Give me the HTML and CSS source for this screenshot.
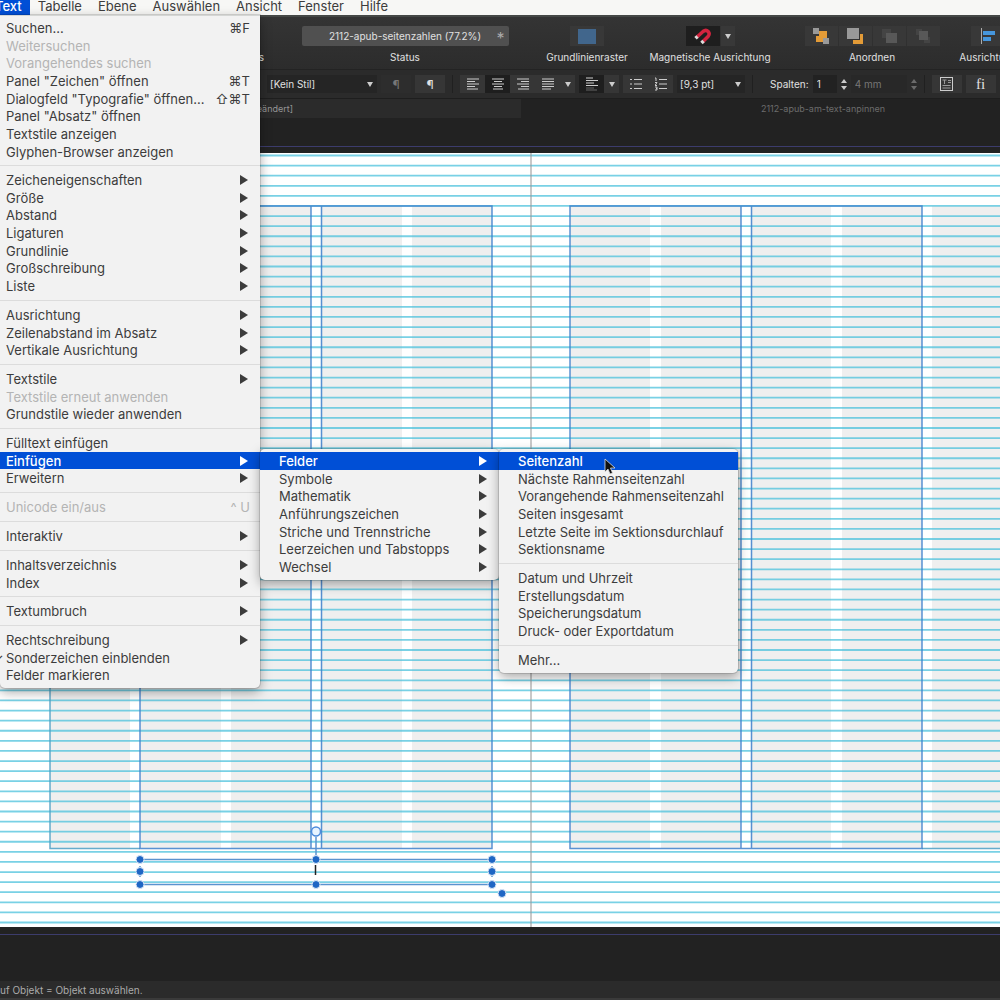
FILE: index.html
```
<!DOCTYPE html>
<html lang="de">
<head>
    <meta charset="UTF-8">
    <meta name="viewport" content="width=device-width, initial-scale=1.0">
    <title>2112-apub-seitenzahlen</title>
    <link rel="stylesheet" href="styles.css">
</head>
<body>
    <!-- Menu Bar -->
    <nav class="menubar">
        <button class="menubar-item open">Text</button>
        <button class="menubar-item">Tabelle</button>
        <button class="menubar-item">Ebene</button>
        <button class="menubar-item">Auswählen</button>
        <button class="menubar-item">Ansicht</button>
        <button class="menubar-item">Fenster</button>
        <button class="menubar-item">Hilfe</button>
    </nav>

    <!-- Toolbar -->
    <header class="toolbar">
        <div class="tool tool-end">
            <div class="tool-buttons"></div>
            <span class="tool-label">s</span>
        </div>
        <div class="tool">
            <div class="status-field"><span>2112-apub-seitenzahlen (77.2%)</span><span class="star">*</span></div>
            <span class="tool-label">Status</span>
        </div>
        <div class="tool">
            <div class="tool-buttons">
                <button class="tool-btn wide" aria-label="Grundlinienraster">
                    <svg width="18" height="16"><rect width="18" height="15" y="1" fill="#41668c"/></svg>
                </button>
            </div>
            <span class="tool-label">Grundlinienraster</span>
        </div>
        <div class="tool">
            <div class="tool-buttons">
                <button class="tool-btn wide pressed" aria-label="Magnetische Ausrichtung">
                    <svg width="18" height="18" viewBox="0 0 18 18" fill="none" stroke-width="3.500">
                        <path d="M3 10 L9 4.500 C13 1.500 17 6 14 9.500 L9 14.500" stroke="#d3243f"/>
                        <path d="M1.500 11.300 L3.500 9.500 M7.500 16 L9.500 14" stroke="#dcdcdc"/>
                    </svg>
                </button>
                <button class="tool-btn arrow" aria-label="Ausrichtungsoptionen"><i class="tri"></i></button>
            </div>
            <span class="tool-label">Magnetische Ausrichtung</span>
        </div>
        <div class="tool">
            <div class="tool-buttons">
                <button class="tool-btn" aria-label="Ganz nach hinten">
                    <svg width="18" height="18"><path d="M7 4h8v7h-4v4H4V9h3z" fill="#e39b37"/><rect x="1" y="1" width="6" height="6" fill="#999"/><rect x="11" y="11" width="6" height="6" fill="#999"/></svg>
                </button>
                <button class="tool-btn" aria-label="Eins nach hinten">
                    <svg width="18" height="18"><path d="M7 7h10v10H7z" fill="#e39b37"/><path d="M2 2h12v11H2z" fill="#333"/><rect x="1" y="1" width="12" height="11" fill="#999"/></svg>
                </button>
                <button class="tool-btn" aria-label="Eins nach vorne" disabled>
                    <svg width="18" height="18"><rect x="2" y="2" width="9" height="9" fill="#444"/><rect x="6" y="6" width="11" height="10" fill="#585858"/></svg>
                </button>
                <button class="tool-btn" aria-label="Ganz nach vorne" disabled>
                    <svg width="18" height="18"><rect x="2" y="2" width="6" height="6" fill="#444"/><rect x="10" y="10" width="6" height="6" fill="#444"/><rect x="5" y="4" width="9" height="9" fill="#585858"/></svg>
                </button>
            </div>
            <span class="tool-label">Anordnen</span>
        </div>
        <div class="tool">
            <div class="tool-buttons">
                <button class="tool-btn wide" aria-label="Links ausrichten">
                    <svg width="18" height="18"><path d="M2.500 1v16" stroke="#aaa"/><rect x="4" y="4" width="12" height="4" fill="#4696dc"/><rect x="4" y="10" width="8" height="4" fill="#4696dc"/></svg>
                </button>
            </div>
            <span class="tool-label">Ausrichtung</span>
        </div>
    </header>

    <!-- Context Toolbar -->
    <div class="context-bar">
        <div class="combo combo-style">
            <select aria-label="Absatzstil"><option>[Kein Stil]</option></select>
            <i class="tri"></i>
        </div>
        <button class="ctx-btn para" disabled>¶</button>
        <button class="ctx-btn para">¶</button>
        <span class="divider"></span>
        <div class="btn-group">
            <button class="ctx-btn" aria-label="Linksbündig"><svg width="12" height="12" class="lines"><path d="M0 1h12M0 3.500h8M0 6h12M0 8.500h8M0 11h11"/></svg></button>
            <button class="ctx-btn pressed" aria-label="Zentriert"><svg width="12" height="12" class="lines"><path d="M0 1h12M2 3.500h8M0 6h12M2 8.500h8M1 11h10"/></svg></button>
            <button class="ctx-btn" aria-label="Rechtsbündig"><svg width="12" height="12" class="lines"><path d="M0 1h12M4 3.500h8M0 6h12M4 8.500h8M1 11h11"/></svg></button>
            <button class="ctx-btn" aria-label="Blocksatz"><svg width="12" height="12" class="lines"><path d="M0 1h12M0 3.500h12M0 6h12M0 8.500h12M0 11h9"/></svg></button>
            <button class="ctx-btn arrow" aria-label="Weitere Ausrichtungen"><i class="tri"></i></button>
        </div>
        <div class="btn-group">
            <button class="ctx-btn pressed" aria-label="Vertikal oben"><svg width="12" height="14" class="lines"><path d="M0 1h7M0 3.500h12M0 6h8M0 8.500h12"/><path d="M0 11h8M0 13h11" opacity=".4"/></svg></button>
            <button class="ctx-btn arrow" aria-label="Vertikale Optionen"><i class="tri"></i></button>
        </div>
        <div class="btn-group">
            <button class="ctx-btn" aria-label="Aufzählung"><svg width="12" height="12" class="lines"><path d="M0 1.500h2M0 6h2M0 10.500h2M4 1.500h8M4 6h8M4 10.500h8"/></svg></button>
            <button class="ctx-btn" aria-label="Nummerierung"><svg width="12" height="14" class="lines"><path d="M0 1h1v3M0 5.500h2l-2 3h2M0 10h2v3H0M1 11.500h1M4 2.500h8M4 7h8M4 11.500h8"/></svg></button>
        </div>
        <div class="combo combo-lead">
            <select aria-label="Zeilenabstand"><option>[9,3 pt]</option></select>
            <i class="tri"></i>
        </div>
        <span class="divider"></span>
        <label class="ctx-label" for="columns">Spalten:</label>
        <div class="stepper">
            <input class="num" id="columns" type="text" value="1">
            <span class="steps"><i class="tri up"></i><i class="tri"></i></span>
        </div>
        <div class="stepper">
            <input class="num num-wide" type="text" value="4 mm" aria-label="Spaltenabstand" disabled>
            <span class="steps off"><i class="tri up"></i><i class="tri"></i></span>
        </div>
        <span class="divider"></span>
        <button class="ctx-btn large" aria-label="Textrahmen">
            <svg width="13" height="14" fill="none" stroke="#ccc"><rect x=".5" y=".5" width="12" height="13"/><path d="M2.500 3h4M4.500 3v4M8 3.500h3M8 5.500h3M2.500 8.500h8M2.500 11h8" stroke="#999"/></svg>
        </button>
        <button class="ctx-btn large ligature">fi</button>
    </div>

    <!-- Document Tabs -->
    <div class="tabs">
        <button class="tab active">[geändert]</button>
        <button class="tab">2112-apub-am-text-anpinnen</button>
    </div>

    <!-- Document -->
    <main class="pasteboard">
        <svg class="spread" width="100%" height="774">
            <g fill="#efefef">
                <rect x="50" y="53" width="80" height="642"/>
                <rect x="140" y="53" width="81" height="642"/>
                <rect x="231" y="53" width="80" height="642"/>
                <rect x="321" y="53" width="81" height="642"/>
                <rect x="412" y="53" width="80" height="642"/>
                <rect x="570" y="53" width="80" height="642"/>
                <rect x="661" y="53" width="80" height="642"/>
                <rect x="751" y="53" width="80" height="642"/>
                <rect x="842" y="53" width="80" height="642"/>
                <rect x="932" y="53" width="80" height="642"/>
            </g>
            <g id="baselines" stroke="#4cc2dc" stroke-opacity=".75" stroke-width="1.800"></g>
            <path d="M531 0v774" stroke="#999" stroke-opacity=".7" stroke-width="1.500"/>
            <!-- Text frames -->
            <g fill="none" stroke="#3c7fcb" stroke-width="1.500" stroke-opacity=".85">
                <path d="M140 53H50v642.500h90M922 695.500h110" stroke="#4a9ec4"/>
                <path d="M140 53h352v642.500H140zM311 53v642M321.500 53v642"/>
                <path d="M570 53h352v642.500H570zM741 53v642M751.500 53v642"/>
            </g>
            <!-- Selected frame -->
            <g fill="none" stroke="#5b93cf" stroke-width="1.500">
                <path d="M140 706.500h352M140 731.500h352M316 684v22"/>
                <path d="M140 706v26M492 706v26" stroke-dasharray="4 3"/>
                <circle cx="316" cy="678.500" r="4.500" fill="#e8f4ff" stroke="#4c8bdc"/>
            </g>
            <path d="M315.500 712v10" stroke="#222" stroke-width="1.500"/>
            <g fill="#1f66c4" stroke="#dbe8f6" stroke-width="1">
                <circle cx="140" cy="706.500" r="4"/>
                <circle cx="140" cy="718.500" r="4"/>
                <circle cx="140" cy="731.500" r="4"/>
                <circle cx="316" cy="706.500" r="4"/>
                <circle cx="316" cy="731.500" r="4"/>
                <circle cx="492" cy="706.500" r="4"/>
                <circle cx="492" cy="718.500" r="4"/>
                <circle cx="492" cy="731.500" r="4"/>
                <circle cx="502" cy="740.500" r="4"/>
            </g>
        </svg>
    </main>

    <!-- Status Bar -->
    <footer class="status-bar"><span>uf Objekt = Objekt auswählen.</span></footer>

    <!-- Text Menu -->
    <div class="menu menu-text">
        <ul>
            <li><button>Suchen...<kbd>⌘F</kbd></button></li>
            <li><button disabled>Weitersuchen</button></li>
            <li><button disabled>Vorangehendes suchen</button></li>
            <li><button>Panel "Zeichen" öffnen<kbd>⌘T</kbd></button></li>
            <li><button>Dialogfeld "Typografie" öffnen...<kbd>⇧⌘T</kbd></button></li>
            <li><button>Panel "Absatz" öffnen</button></li>
            <li><button>Textstile anzeigen</button></li>
            <li><button>Glyphen-Browser anzeigen</button></li>
        </ul>
        <ul>
            <li><button class="more">Zeicheneigenschaften</button></li>
            <li><button class="more">Größe</button></li>
            <li><button class="more">Abstand</button></li>
            <li><button class="more">Ligaturen</button></li>
            <li><button class="more">Grundlinie</button></li>
            <li><button class="more">Großschreibung</button></li>
            <li><button class="more">Liste</button></li>
        </ul>
        <ul>
            <li><button class="more">Ausrichtung</button></li>
            <li><button class="more">Zeilenabstand im Absatz</button></li>
            <li><button class="more">Vertikale Ausrichtung</button></li>
        </ul>
        <ul>
            <li><button class="more">Textstile</button></li>
            <li><button disabled>Textstile erneut anwenden</button></li>
            <li><button>Grundstile wieder anwenden</button></li>
        </ul>
        <ul>
            <li><button>Fülltext einfügen</button></li>
            <li>
                <button class="more selected">Einfügen</button>
                <div class="menu submenu">
                    <ul>
                        <li>
                            <button class="more selected">Felder</button>
                            <div class="menu submenu">
                                <ul>
                                    <li><button class="selected">Seitenzahl</button></li>
                                    <li><button>Nächste Rahmenseitenzahl</button></li>
                                    <li><button>Vorangehende Rahmenseitenzahl</button></li>
                                    <li><button>Seiten insgesamt</button></li>
                                    <li><button>Letzte Seite im Sektionsdurchlauf</button></li>
                                    <li><button>Sektionsname</button></li>
                                </ul>
                                <ul>
                                    <li><button>Datum und Uhrzeit</button></li>
                                    <li><button>Erstellungsdatum</button></li>
                                    <li><button>Speicherungsdatum</button></li>
                                    <li><button>Druck- oder Exportdatum</button></li>
                                </ul>
                                <ul>
                                    <li><button>Mehr...</button></li>
                                </ul>
                                <svg class="pointer" width="12" height="18" viewBox="0 0 12 18">
                                    <path d="M1 1v13l3-3 2 5 2.500-1-2-5h4.500z" fill="#111" stroke="#ddd" stroke-width=".8"/>
                                </svg>
                            </div>
                        </li>
                        <li><button class="more">Symbole</button></li>
                        <li><button class="more">Mathematik</button></li>
                        <li><button class="more">Anführungszeichen</button></li>
                        <li><button class="more">Striche und Trennstriche</button></li>
                        <li><button class="more">Leerzeichen und Tabstopps</button></li>
                        <li><button class="more">Wechsel</button></li>
                    </ul>
                </div>
            </li>
            <li><button class="more">Erweitern</button></li>
        </ul>
        <ul>
            <li><button disabled>Unicode ein/aus<kbd>^ U</kbd></button></li>
        </ul>
        <ul>
            <li><button class="more">Interaktiv</button></li>
        </ul>
        <ul>
            <li><button class="more">Inhaltsverzeichnis</button></li>
            <li><button class="more">Index</button></li>
        </ul>
        <ul>
            <li><button class="more">Textumbruch</button></li>
        </ul>
        <ul>
            <li><button class="more">Rechtschreibung</button></li>
            <li><button class="checked">Sonderzeichen einblenden</button></li>
            <li><button>Felder markieren</button></li>
        </ul>
    </div>

    <script>
        // Baseline grid: 77 lines over the height of the spread
        const grid = document.getElementById("baselines");
        const firstLine = 2.5;
        const lastLine = 769.5;
        const count = 77;

        for (let i = 0; i < count; i++) {
            const y = firstLine + i * (lastLine - firstLine) / (count - 1);
            const line = document.createElementNS("http://www.w3.org/2000/svg", "line");
            line.setAttribute("x1", "0");
            line.setAttribute("x2", "100%");
            line.setAttribute("y1", y);
            line.setAttribute("y2", y);
            grid.appendChild(line);
        }
    </script>
</body>
</html>
```
FILE: styles.css
```
/* Global Styles */
* {
    box-sizing: border-box;
    margin: 0;
    padding: 0;
}
body {
    display: flex;
    flex-direction: column;
    min-height: 100vh;
    overflow: hidden;
    position: relative;
    background-color: #222;
    font-family: Inter, "Liberation Sans", sans-serif;
    font-size: 13px;
    color: #3c3c3c;
}
button, input, select {
    font: inherit;
    color: inherit;
    background: none;
    border: none;
}

/* Menu Bar */
.menubar {
    display: flex;
    align-items: flex-end;
    height: 15px;
    margin-left: -13px;
    background-color: #f7f7f5;
}
.menubar-item {
    flex: none;
    height: 18px;
    padding: 0 8px;
    line-height: 18px;
}
.menubar-item.open {
    background-color: #004fd6;
    color: #fff;
    font-weight: 500;
}

/* Toolbar */
.toolbar {
    display: grid;
    grid-template-columns: 264px 282px 82px 164px 160px 72px;
    height: 55px;
    padding-top: 9px;
    border-top: 2px solid #454846;
    border-bottom: 1px solid #232323;
    background: linear-gradient(#343434, #2c2c2c);
    color: #e0e0e0;
    font-size: 10px;
    overflow: hidden;
}
.tool {
    display: flex;
    flex-direction: column;
    align-items: center;
    gap: 4px;
}
.tool-end {
    align-items: flex-end;
}
.tool-label {
    line-height: 14px;
    white-space: nowrap;
}
.tool-buttons {
    display: flex;
    gap: 1px;
    height: 20px;
}
.tool-btn {
    display: flex;
    align-items: center;
    justify-content: center;
    width: 33px;
    height: 20px;
    background-color: #383838;
}
.tool-btn.wide {
    width: 34px;
}
.tool-btn.arrow {
    width: 14px;
}
.tool-btn.pressed, .ctx-btn.pressed {
    background-color: #1e1e1e;
}
.status-field {
    display: flex;
    justify-content: center;
    position: relative;
    width: 207px;
    height: 20px;
    border-radius: 2px;
    background-color: #505050;
    line-height: 20px;
}
.star {
    position: absolute;
    right: 4px;
    top: 2px;
    font-size: 16px;
    color: #aaa;
}
.tri {
    border: 3px solid transparent;
    border-top: 5px solid #ccc;
    border-bottom: 0;
}
.tri.up {
    border-top: 0;
    border-bottom: 5px solid #ccc;
}

/* Context Toolbar */
.context-bar {
    display: flex;
    align-items: center;
    gap: 4px;
    height: 28px;
    padding-left: 267px;
    background-color: #2b2b2b;
    color: #e0e0e0;
    font-size: 10px;
    overflow: hidden;
}
.context-bar > * {
    flex: none;
}
.ctx-btn {
    display: flex;
    align-items: center;
    justify-content: center;
    width: 25px;
    height: 18px;
    background-color: #363636;
}
.ctx-btn.para, .ctx-btn.large {
    width: 30px;
}
.ctx-btn.para {
    font-size: 12px;
}
.ctx-btn:disabled {
    background-color: #2d2d2d;
    color: #777;
}
.ctx-btn.arrow {
    width: 15px;
}
.ctx-btn.ligature {
    font-family: "Liberation Serif", serif;
    font-size: 15px;
}
.btn-group {
    display: flex;
}
.lines {
    fill: none;
    stroke: #ccc;
}
.divider {
    width: 1px;
    height: 18px;
    margin: 0 3px;
    background-color: #202020;
}
.combo {
    display: flex;
    position: relative;
    height: 18px;
    background-color: #252525;
}
.combo select {
    width: 100%;
    padding-left: 3px;
    appearance: none;
}
.combo .tri {
    position: absolute;
    right: 4px;
    top: 7px;
}
.combo-style {
    width: 110px;
}
.combo-lead {
    width: 68px;
}
.ctx-label {
    margin-left: 10px;
}
.stepper {
    display: flex;
    align-items: center;
    gap: 4px;
}
.num {
    width: 24px;
    height: 18px;
    padding-left: 4px;
    background-color: #222;
}
.num-wide {
    width: 56px;
}
.num:disabled {
    color: #777;
    background-color: #282828;
}
.steps {
    display: flex;
    flex-direction: column;
    gap: 3px;
}
.steps .tri {
    border-width: 4px 3px 0;
}
.steps .tri.up {
    border-width: 0 3px 4px;
}
.steps.off {
    opacity: 0.4;
}

/* Document Tabs */
.tabs {
    display: flex;
    height: 20px;
    border-top: 1px solid #1e1e1e;
    overflow: hidden;
}
.tab {
    flex: none;
    width: 604px;
    color: #6c6c6c;
    font-size: 9px;
}
.tab.active {
    width: 521px;
    padding-right: 228px;
    background-color: #2b2b2b;
    color: #959595;
    text-align: right;
}

/* Document */
.pasteboard {
    flex: 1;
    margin: 28px 0 46px;
    padding: 6px 0 7px;
    border-top: 1px solid #3c3c6c;
    border-bottom: 1px solid #3c3c6c;
}
.spread {
    display: block;
    background-color: #fff;
}

/* Status Bar */
.status-bar {
    height: 19px;
    border-bottom: 2px solid #3a3a3a;
    background-color: #2b2b2b;
    color: #aaa;
    font-size: 10px;
    line-height: 18px;
}

/* Menus */
.menu {
    position: absolute;
    background-color: #f2f2f2;
    border-radius: 0 0 5px 5px;
    box-shadow: 0 0 0 1px rgba(0,0,0,0.12), 0 4px 12px rgba(0,0,0,0.35);
}
.menu-text {
    top: 15px;
    left: 0;
    width: 260px;
    padding: 3px 0 4px;
    border-top: 1px solid #d4d6d4;
}
.submenu {
    top: -3px;
    left: 100%;
    width: 239px;
    padding: 3px 0 4px;
    border-radius: 5px;
}
.menu ul {
    list-style: none;
}
.menu ul + ul {
    margin-top: 5px;
    padding-top: 5px;
    border-top: 1px solid #dcdcdc;
}
.menu li {
    position: relative;
    height: 18px;
}
.menu li:nth-child(3n+2) {
    height: 17px;
}
.menu li > button {
    display: flex;
    align-items: center;
    justify-content: space-between;
    width: 100%;
    height: 100%;
    padding: 0 10px 0 6px;
    white-space: nowrap;
}
.menu .submenu li > button {
    padding-left: 19px;
}
.menu button:disabled {
    color: #b4b4b4;
}
.menu li > button.selected {
    background-color: #004fd6;
    color: #fff;
    font-weight: 500;
}
.menu .more::after {
    content: "";
    margin-right: 2px;
    border: 5px solid transparent;
    border-left: 8px solid currentColor;
    border-right: 0;
}
.menu kbd {
    font: inherit;
}
.menu .checked::before {
    content: "✓";
    position: absolute;
    left: -8px;
}
.pointer {
    position: absolute;
    top: 9px;
    left: 105px;
}
```
